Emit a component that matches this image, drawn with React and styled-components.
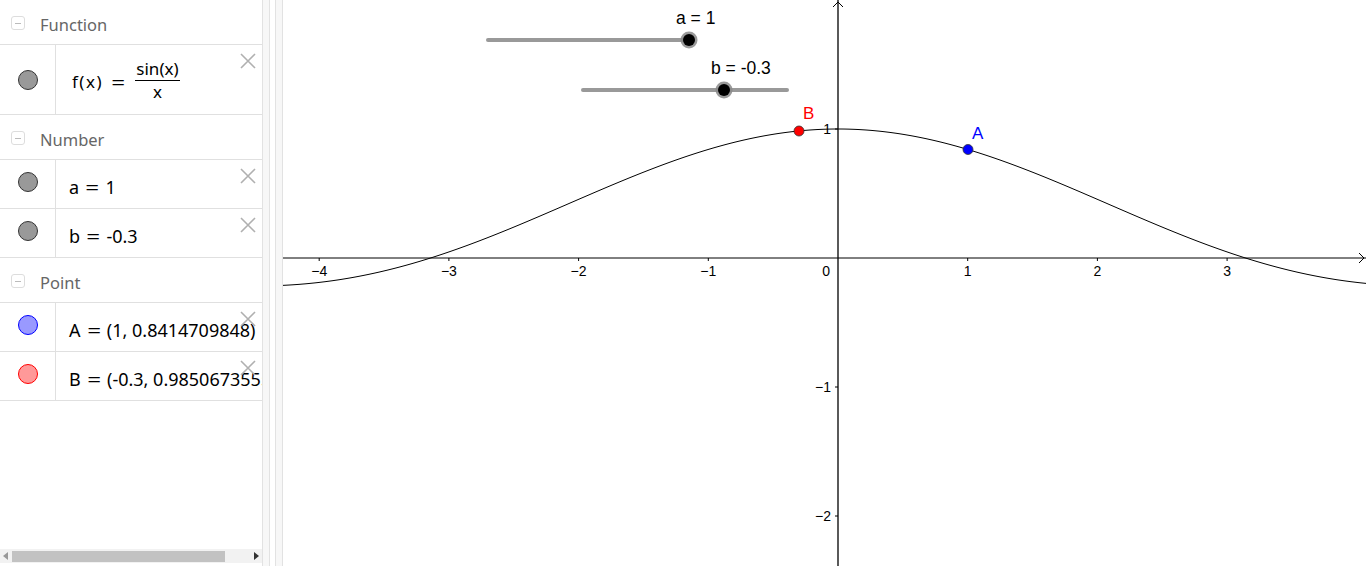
import React from "react";
import styled, { createGlobalStyle } from "styled-components";

const GlobalStyle = createGlobalStyle`
  html, body, #root {
    margin: 0;
    height: 100%;
  }
  body {
    font-family: "Noto Sans", "DejaVu Sans", sans-serif;
    background: #fff;
    overflow: hidden;
  }
`;

const Page = styled.div`
  display: flex;
  height: 100%;
  width: 100%;
`;

const AlgebraPanel = styled.div`
  width: 262px;
  flex-shrink: 0;
  display: flex;
  flex-direction: column;
  overflow: hidden;
`;

const ItemList = styled.div`
  flex: 1;
`;

const CategoryHeader = styled.div`
  height: 45px;
  box-sizing: border-box;
  padding-top: 4px;
  display: flex;
  align-items: center;
  border-bottom: 1px solid #e0e0e0;
  color: #666;
  font-size: 16.5px;
  padding-left: 11px;
  gap: 15px;
`;

const Collapse = styled.span`
  width: 12px;
  height: 12px;
  border: 1px solid #ddd;
  border-radius: 3px;
  position: relative;
  margin-top: -2px;
  &::after {
    content: "";
    position: absolute;
    left: 3px;
    right: 3px;
    top: 6px;
    height: 1px;
    background: #bbb;
  }
`;

const Row = styled.div`
  height: ${(p) => p.$h || 48}px;
  display: flex;
  border-bottom: 1px solid #e0e0e0;
  position: relative;
`;

const MarbleCell = styled.div`
  width: 56px;
  flex-shrink: 0;
  border-right: 1px solid #e0e0e0;
  display: flex;
  justify-content: center;
  align-items: ${(p) => (p.$center ? "center" : "flex-start")};
  padding-top: ${(p) => (p.$center ? 0 : 12)}px;
  box-sizing: border-box;
`;

const Marble = styled.span`
  width: 18px;
  height: 18px;
  border-radius: 50%;
  background: ${(p) => p.$fill};
  border: 1px solid ${(p) => p.$stroke};
  margin-left: 1px;
`;

const Value = styled.div`
  flex: 1;
  display: flex;
  align-items: center;
  padding-left: 13px;
  padding-top: ${(p) => p.$pt || 0}px;
  font-size: 18px;
  color: #000;
  white-space: nowrap;
  overflow: hidden;
`;

const Eq = styled.span`
  margin: 0 ${(p) => p.$m || 8}px;
  display: inline-block;
  transform: scaleX(1.35);
`;

const Fx = styled.span`
  font-size: 17px;
  letter-spacing: 1.5px;
  margin-left: 3px;
`;

const Fraction = styled.span`
  display: inline-flex;
  flex-direction: column;
  align-items: center;
  font-size: 17px;
  line-height: 21px;
  margin-top: -4px;
  margin-left: 2px;
`;

const Numerator = styled.span`
  border-bottom: 1px solid #000;
  padding: 0 1px 1px;
`;

const Close = styled.svg`
  position: absolute;
  right: 6px;
  top: 8px;
`;

const ScrollBar = styled.div`
  height: 14px;
  margin-bottom: 3px;
  display: flex;
  align-items: center;
  background: #f2f2f2;
  padding: 0 3px;
  gap: 4px;
`;

const Thumb = styled.div`
  width: 213px;
  height: 11px;
  background: #c2c2c2;
`;

const Arrow = styled.span`
  width: 0;
  height: 0;
  border-top: 4px solid transparent;
  border-bottom: 4px solid transparent;
  ${(p) =>
    p.$left
      ? "border-right: 5px solid #999;"
      : "border-left: 5px solid #333; margin-left: auto;"}
`;

const Splitter = styled.div`
  width: 21px;
  flex-shrink: 0;
  display: flex;
  gap: 5px;
`;

const Strip = styled.div`
  width: 6px;
  background: #f7f7f7;
  border-left: 1px solid #e2e2e2;
  border-right: 1px solid #e2e2e2;
`;

const GraphicsView = styled.div`
  flex: 1;
  position: relative;
  overflow: hidden;
`;

const Canvas = styled.svg`
  display: block;
  width: 100%;
  height: 100%;
  font-family: "Liberation Sans", Arial, sans-serif;
`;

const CloseIcon = () => (
  <Close width="16" height="16" viewBox="0 0 16 16">
    <path d="M1 1 L15 15 M15 1 L1 15" stroke="#b0b0b0" strokeWidth="1.6" />
  </Close>
);

const Category = ({ title }) => (
  <CategoryHeader>
    <Collapse />
    {title}
  </CategoryHeader>
);

const OX = 555;
const OY = 258;
const SX = 129.7;
const SY = 129;

const curvePath = () => {
  const pts = [];
  for (let px = 0; px <= 1090; px += 2) {
    const x = (px - OX) / SX;
    const y = Math.abs(x) < 1e-9 ? 1 : Math.sin(x) / x;
    pts.push(`${px.toFixed(1)},${(OY - y * SY).toFixed(2)}`);
  }
  return "M" + pts.join(" L");
};

const xTicks = [-4, -3, -2, -1, 1, 2, 3];
const yTicks = [1, -1, -2];
const fmt = (n) => (n < 0 ? "\u2212" + Math.abs(n) : String(n));

const Slider = ({ x1, x2, y, knob, label }) => (
  <g>
    <line x1={x1} y1={y} x2={x2} y2={y} stroke="#999" strokeWidth="4" strokeLinecap="round" />
    <circle cx={knob} cy={y} r="8.5" fill="#888" opacity="0.85" />
    <circle cx={knob} cy={y} r="6" fill="#000" />
    <text x={knob - 13} y={y - 16} fontSize="17.5" fill="#000">
      {label}
    </text>
  </g>
);

const Graph = () => (
  <Canvas>
    <line x1="0" y1={OY} x2="1083" y2={OY} stroke="#000" strokeWidth="1" />
    <path d={`M1076 ${OY - 5} L1081 ${OY} L1076 ${OY + 5}`} fill="none" stroke="#000" />
    <line x1={OX} y1="0" x2={OX} y2="566" stroke="#000" strokeWidth="1.3" />
    <path d={`M${OX - 5} 7 L${OX} 2 L${OX + 5} 7`} fill="none" stroke="#000" />
    {xTicks.map((k) => (
      <g key={k}>
        <line x1={OX + k * SX} y1={OY} x2={OX + k * SX} y2={OY + 3} stroke="#000" />
        <text x={OX + k * SX} y={OY + 18} fontSize="14" textAnchor="middle">
          {fmt(k)}
        </text>
      </g>
    ))}
    <text x={OX - 8} y={OY + 18} fontSize="14" textAnchor="end">
      0
    </text>
    {yTicks.map((k) => (
      <g key={k}>
        <line x1={OX - 3} y1={OY - k * SY} x2={OX} y2={OY - k * SY} stroke="#000" />
        <text x={OX - 7} y={OY - k * SY + 5} fontSize="14" textAnchor="end">
          {fmt(k)}
        </text>
      </g>
    ))}
    <path d={curvePath()} fill="none" stroke="#000" strokeWidth="1" />
    <Slider x1={205} x2={406} y={40} knob={406} label="a = 1" />
    <Slider x1={300} x2={504} y={90} knob={441} label="b = -0.3" />
    <circle cx={516} cy={131} r="5" fill="#ff0000" stroke="#333" strokeWidth="0.8" />
    <text x={520} y={119} fontSize="17" fill="#ff0000">
      B
    </text>
    <circle cx={685} cy={149.5} r="5" fill="#0000ff" stroke="#333" strokeWidth="0.8" />
    <text x={689} y={139} fontSize="17" fill="#0000ff">
      A
    </text>
  </Canvas>
);

export default function App() {
  return (
    <Page>
      <GlobalStyle />
      <AlgebraPanel>
        <ItemList>
          <Category title="Function" />
          <Row $h={69}>
            <MarbleCell $center>
              <Marble $fill="#999" $stroke="#333" />
            </MarbleCell>
            <Value $pt={4}>
              <Fx>f(x)</Fx>
              <Eq $m={10}>=</Eq>
              <Fraction>
                <Numerator>sin(x)</Numerator>
                <span>x</span>
              </Fraction>
            </Value>
            <CloseIcon />
          </Row>
          <Category title="Number" />
          <Row>
            <MarbleCell>
              <Marble $fill="#999" $stroke="#333" />
            </MarbleCell>
            <Value $pt={6}>
              a<Eq>=</Eq>1
            </Value>
            <CloseIcon />
          </Row>
          <Row>
            <MarbleCell>
              <Marble $fill="#999" $stroke="#333" />
            </MarbleCell>
            <Value $pt={6}>
              b<Eq>=</Eq>-0.3
            </Value>
            <CloseIcon />
          </Row>
          <Category title="Point" />
          <Row>
            <MarbleCell>
              <Marble $fill="#9999ff" $stroke="#0000ff" />
            </MarbleCell>
            <Value $pt={6}>
              A<Eq>=</Eq>(1, 0.8414709848)
            </Value>
            <CloseIcon />
          </Row>
          <Row>
            <MarbleCell>
              <Marble $fill="#ff9999" $stroke="#ff0000" />
            </MarbleCell>
            <Value $pt={6}>
              B<Eq>=</Eq>(-0.3, 0.9850673555)
            </Value>
            <CloseIcon />
          </Row>
        </ItemList>
        <ScrollBar>
          <Arrow $left />
          <Thumb />
          <Arrow />
        </ScrollBar>
      </AlgebraPanel>
      <Splitter>
        <Strip />
        <Strip />
      </Splitter>
      <GraphicsView>
        <Graph />
      </GraphicsView>
    </Page>
  );
}
